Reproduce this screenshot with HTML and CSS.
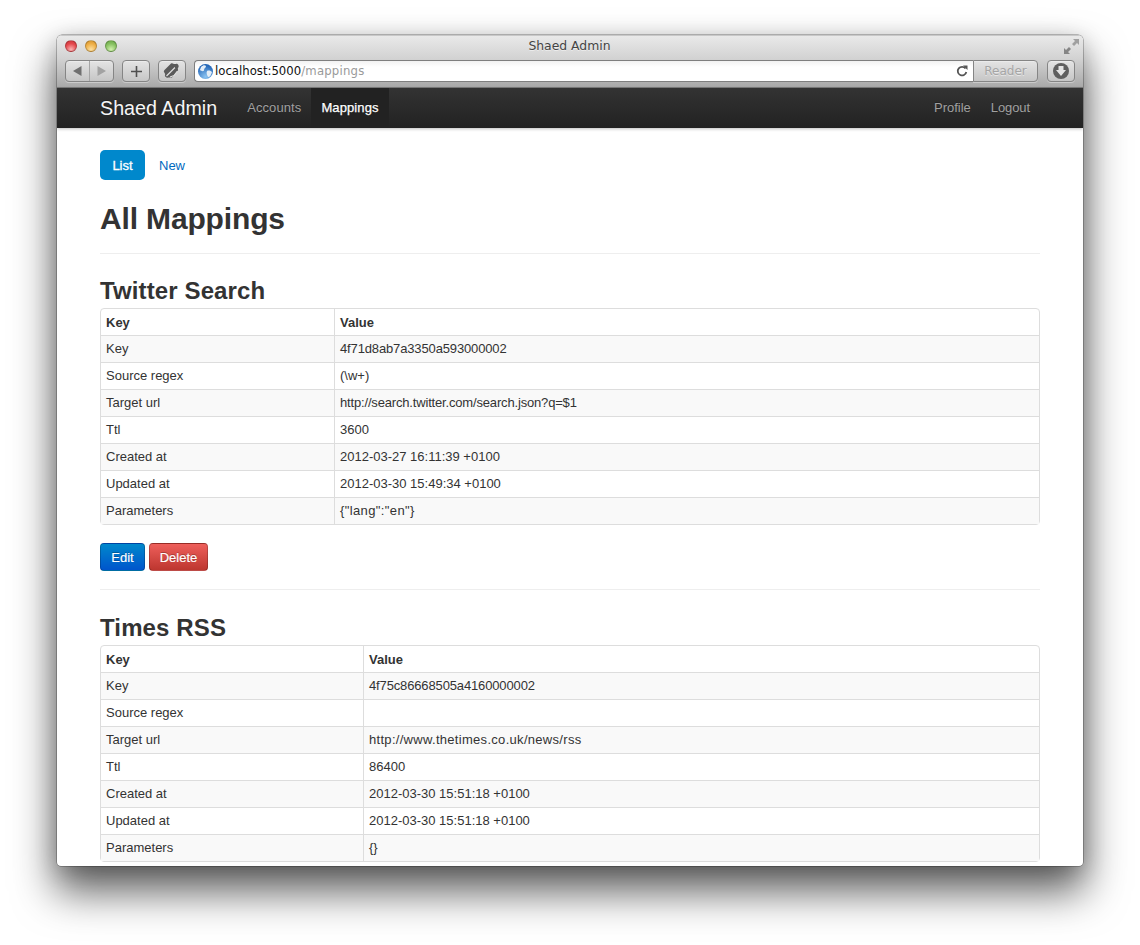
FILE: index.html
```html
<!DOCTYPE html>
<html lang="en">
<head>
<meta charset="utf-8">
<title>Shaed Admin</title>
<link rel="stylesheet" href="styles.css">
</head>
<body>
<div class="window">
  <header class="chrome">
    <div class="titlebar">
      <div class="lights"><span class="light red"></span><span class="light yellow"></span><span class="light green"></span></div>
      <div class="title">Shaed Admin</div>
      <svg class="fullscreen" width="15" height="15" viewBox="0 0 15 15"><path d="M15 0H9l2 2-3 3 2 2 3-3 2 2z" fill="#a0a0a0"/><path d="M0 15h6l-2-2 3-3-2-2-3 3-2-2z" fill="#858585"/></svg>
    </div>
    <div class="toolbar">
      <div class="tool nav-pair">
        <span class="half"><svg width="9" height="10" viewBox="0 0 9 10"><path d="M8.500 0v10L0 5z" fill="#707070"/></svg></span>
        <span class="half"><svg width="9" height="10" viewBox="0 0 9 10"><path d="M.5 0v10L9 5z" fill="#a2a2a2"/></svg></span>
      </div>
      <div class="tool square"><svg width="11" height="11" viewBox="0 0 11 11"><path d="M4.700 0h1.600v4.700H11v1.600H6.300V11H4.700V6.300H0V4.700h4.700z" fill="#4f4f4f"/></svg></div>
      <div class="tool square share"><svg width="18" height="18" viewBox="0 0 18 18"><path d="M8 1.500c1.500-1 2.500.5 3.500.5s2-.8 3 0 1.500 2 1 3-1 1.500-.5 2.500-.5 1.500-1.500 2.500l-4 5c-1 1-2 .5-3 .5s-2 .5-3 0-2-1.500-1.500-2.500-.5-2-1-3 0-1.500 1-2.500z" fill="#5a5a5a"/><path d="M3.500 14L12 5.500M7 15l4-1.500 3.500-4.500" stroke="#dcdcdc" stroke-width="1.200" fill="none"/><path d="M11 4l3 3" stroke="#5a5a5a" stroke-width="1"/></svg></div>
      <div class="address">
        <svg class="globe" width="15" height="15" viewBox="0 0 15 15"><defs><radialGradient id="sea" cx="50%" cy="85%" r="80%"><stop offset="0" stop-color="#8cc4f2"/><stop offset="1" stop-color="#1f62b4"/></radialGradient></defs><circle cx="7.500" cy="7.500" r="7.500" fill="url(#sea)"/><path d="M3 3c2-2 4-2 5-1 0 2-2 2-2 4S3 7 2 6zM9 7c2-1 4 0 5 1-1 3-2 5-4 5-1-2-2-4-1-6z" fill="#e4eef7"/></svg>
        <span class="host">localhost:5000</span><span class="path">/mappings</span>
        <svg class="reload" width="12" height="12" viewBox="0 0 12 12"><path d="M9.500 3.500A4.300 4.300 0 1 0 10.300 7" fill="none" stroke="#555" stroke-width="1.800"/><path d="M7 0.500l4.500 0v4.500z" fill="#555"/></svg>
      </div>
      <div class="tool reader">Reader</div>
      <div class="tool square download"><svg width="16" height="16" viewBox="0 0 16 16"><circle cx="8" cy="8" r="8" fill="#5f5f5f"/><path d="M5.500 3h5v4H13l-5 6-5-6h2.500z" fill="#e4e4e4"/></svg></div>
    </div>
  </header>

  <nav class="navbar">
    <a class="brand" href="#">Shaed Admin</a>
    <ul class="nav nav-left">
      <li><a href="#">Accounts</a></li>
      <li class="active"><a href="#">Mappings</a></li>
    </ul>
    <ul class="nav nav-right">
      <li><a href="#">Profile</a></li>
      <li><a href="#">Logout</a></li>
    </ul>
  </nav>

  <main class="content">
    <ul class="pills">
      <li class="active"><a href="#">List</a></li>
      <li><a href="#">New</a></li>
    </ul>
    <h1 class="page-title">All Mappings</h1>

    <section class="mapping first">
      <h2>Twitter Search</h2>
      <table class="kv narrow">
        <thead><tr><th>Key</th><th>Value</th></tr></thead>
        <tbody>
          <tr><td>Key</td><td class="tight">4f71d8ab7a3350a593000002</td></tr>
          <tr><td>Source regex</td><td>(\w+)</td></tr>
          <tr><td>Target url</td><td class="tighter">http://search.twitter.com/search.json?q=$1</td></tr>
          <tr><td>Ttl</td><td>3600</td></tr>
          <tr><td>Created at</td><td>2012-03-27 16:11:39 +0100</td></tr>
          <tr><td>Updated at</td><td>2012-03-30 15:49:34 +0100</td></tr>
          <tr><td>Parameters</td><td class="loose">{"lang":"en"}</td></tr>
        </tbody>
      </table>
      <div class="actions">
        <a class="btn btn-primary" href="#">Edit</a>
        <a class="btn btn-danger" href="#">Delete</a>
      </div>
    </section>

    <section class="mapping">
      <h2>Times RSS</h2>
      <table class="kv wide">
        <thead><tr><th>Key</th><th>Value</th></tr></thead>
        <tbody>
          <tr><td>Key</td><td class="tight">4f75c86668505a4160000002</td></tr>
          <tr><td>Source regex</td><td></td></tr>
          <tr><td>Target url</td><td class="loose-url">http://www.thetimes.co.uk/news/rss</td></tr>
          <tr><td>Ttl</td><td>86400</td></tr>
          <tr><td>Created at</td><td>2012-03-30 15:51:18 +0100</td></tr>
          <tr><td>Updated at</td><td>2012-03-30 15:51:18 +0100</td></tr>
          <tr><td>Parameters</td><td>{}</td></tr>
        </tbody>
      </table>
    </section>
  </main>
</div>
</body>
</html>
```

FILE: styles.css
```css
* { box-sizing: border-box; }
html, body { margin: 0; height: 945px; overflow: hidden; background: #fff; }
body {
  padding: 35px 57px 0;
  font-family: "Liberation Sans", Arial, sans-serif;
  font-size: 13px;
  line-height: 18px;
  color: #333;
}
a { text-decoration: none; }
ul { list-style: none; margin: 0; padding: 0; }

.window {
  width: 1026px;
  height: 831px;
  background: #fff;
  border-radius: 5px 5px 4px 4px;
  overflow: hidden;
  box-shadow: 0 0 0 0.5px rgba(0,0,0,.45), 0 24px 42px 2px rgba(0,0,0,.62), 0 4px 22px rgba(0,0,0,.18);
}

.chrome {
  height: 53px;
  padding: 0 8px;
  background: linear-gradient(#e9e9e9, #d2d2d2 45%, #a9a9a9);
  border-top: 1px solid #c8c8c8;
  border-bottom: 1px solid #7d7d7d;
}
.titlebar { height: 20px; margin-bottom: 4px; display: flex; align-items: center; }
.lights { display: flex; gap: 8px; }
.light { width: 12px; height: 12px; border-radius: 50%; border: 1px solid rgba(0,0,0,.22); }
.red { background: radial-gradient(circle at 50% 85%, #fbb4b4, #e4474c 60%, #c9343a); }
.yellow { background: radial-gradient(circle at 50% 85%, #fde0a0, #eeae45 60%, #d0922e); }
.green { background: radial-gradient(circle at 50% 85%, #d2f2ae, #86c060 60%, #68a546); }
.title {
  flex: 1;
  text-align: center;
  font-family: "DejaVu Sans", sans-serif;
  font-size: 12.400px;
  color: #444;
  text-shadow: 0 1px 0 rgba(255,255,255,.5);
  padding-right: 42px;
}
.fullscreen { margin-right: -4px; }

.toolbar { display: flex; align-items: stretch; height: 22px; }
.tool {
  display: flex;
  align-items: center;
  justify-content: center;
  height: 22px;
  border: 1px solid #858585;
  border-radius: 4px;
  background: linear-gradient(#e4e4e4, #c6c6c6);
  box-shadow: 0 1px 0 rgba(255,255,255,.35), inset 0 1px 0 rgba(255,255,255,.3);
}
.nav-pair { width: 49px; margin-right: 8px; }
.half { flex: 1; height: 100%; display: flex; align-items: center; justify-content: center; }
.half + .half { border-left: 1px solid #a5a5a5; }
.square { width: 28px; margin-right: 8px; }
.address {
  width: 779px;
  height: 22px;
  display: flex;
  align-items: center;
  padding-left: 3px;
  border: 1px solid #7f7f7f;
  border-right: 0;
  border-radius: 4px 0 0 4px;
  background: linear-gradient(#f2f2f2, #fff 30%);
  font-family: "DejaVu Sans", sans-serif;
  font-size: 11.700px;
}
.globe { margin-right: 2px; flex: none; }
.host { color: #111; }
.path { color: #9a9a9a; letter-spacing: .2px; }
.reload { margin-left: auto; margin-right: 5px; }
.reader {
  width: 65px;
  margin-right: 9px;
  border-radius: 0 4px 4px 0;
  color: #a5a5a5;
  font-family: "DejaVu Sans", sans-serif;
  font-size: 12px;
  text-shadow: 0 1px 0 rgba(255,255,255,.5);
}
.download { margin-right: 0; }

.navbar {
  height: 40px;
  display: flex;
  padding: 0 43px;
  background: linear-gradient(#333, #222);
  box-shadow: 0 1px 3px rgba(0,0,0,.25);
}
.brand {
  font-size: 19.700px;
  line-height: 40px;
  color: #f6f6f6;
  margin-right: 20px;
  text-shadow: 0 -1px 0 rgba(0,0,0,.25);
}
.nav { display: flex; }
.nav a {
  display: block;
  padding: 11px 10px;
  color: #a0a0a0;
  text-shadow: 0 -1px 0 rgba(0,0,0,.25);
}
.nav-left a { letter-spacing: .1px; }
.nav-right li:last-child a { letter-spacing: -.1px; }
.nav .active a { background: #222; color: #fff; -webkit-text-stroke: 0.25px #fff; }
.nav-right { margin-left: auto; }

.content { padding: 22px 43px 0; }
.pills { display: flex; gap: 4px; }
.pills a {
  display: block;
  height: 30px;
  padding: 7px 10px 0;
  line-height: 18px;
  border-radius: 5px;
  color: #0069c0;
}
.pills .active a { width: 45px; text-align: center; padding: 7px 0 0; background: #0088cc; color: #fff; -webkit-text-stroke: 0.3px #fff; }

.page-title {
  margin: 21px 0 0;
  height: 53px;
  border-bottom: 1px solid #eee;
  font-size: 30px;
  line-height: 36px;
  letter-spacing: -.15px;
  color: #333;
}
.mapping { padding-top: 20px; }
.mapping.first { padding-top: 19px; border-bottom: 1px solid #eee; padding-bottom: 18px; }
.mapping h2 { margin: 0; height: 35px; font-size: 24px; line-height: 36px; letter-spacing: .12px; color: #333; }

.kv {
  width: 940px;
  table-layout: fixed;
  border-collapse: separate;
  border-spacing: 0;
  border: 1px solid #ddd;
  border-radius: 4px;
}
.kv th, .kv td {
  height: 27px;
  padding: 4px 5px;
  text-align: left;
  vertical-align: top;
  border-top: 1px solid #ddd;
  line-height: 18px;
}
.kv thead th { border-top: 0; height: 26px; padding: 5px 5px 3px; color: #333; }
.kv th + th, .kv td + td { border-left: 1px solid #ddd; }
.kv tbody tr:nth-child(odd) td { background: #f9f9f9; }
.narrow th:first-child { width: 233px; }
.wide th:first-child { width: 262px; }
.kv .tight { letter-spacing: -.14px; }
.kv .tighter { letter-spacing: -.17px; }
.kv .loose { letter-spacing: .38px; }
.kv .loose-url { letter-spacing: .3px; }

.actions { display: flex; gap: 4px; margin-top: 18px; }
.btn {
  height: 28px;
  border-radius: 4px;
  border: 1px solid rgba(0,0,0,.2);
  color: #fff;
  text-align: center;
  padding: 5px 0 3px;
  text-shadow: 0 -1px 0 rgba(0,0,0,.25);
  -webkit-text-stroke: 0.15px #fff;
  line-height: 18px;
}
.btn-primary { width: 45px; background: linear-gradient(#0088cc, #0055cc); }
.btn-danger { width: 59px; background: linear-gradient(#ee5f5b, #bd362f); }
```
